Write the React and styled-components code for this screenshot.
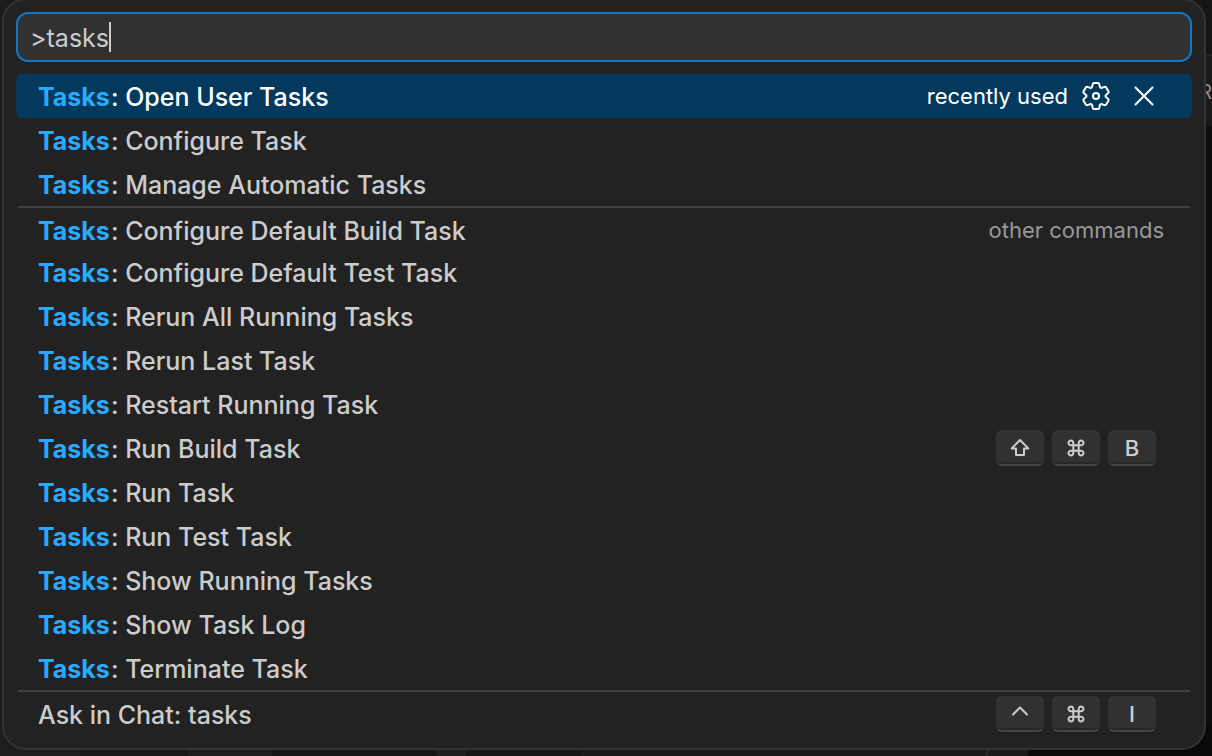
import React, { useState } from "react";
import styled, { createGlobalStyle } from "styled-components";

const GlobalStyle = createGlobalStyle`
  *, *::before, *::after { box-sizing: border-box; }
  html { background: #1b1b1b; overflow: hidden; }
  body {
    margin: 0;
    font-family: Inter, "Liberation Sans", sans-serif;
    font-feature-settings: "calt" 0;
    color: #cccccc;
    -webkit-font-smoothing: antialiased;
  }
`;

const Workbench = styled.div`
  position: relative;
  min-height: 100vh;
  overflow: hidden;
  padding: 0 6px 0 2px;
  background: #1b1b1b;
`;

const SideStrip = styled.div`
  position: absolute;
  top: 0;
  right: 0;
  bottom: 0;
  width: 24px;
  background: #0e0e0e;
`;

const SideTab = styled.div`
  position: absolute;
  right: 0;
  top: 0;
  width: 24px;
  height: 126px;
  background: linear-gradient(#151515 54px, #222222 54px, #222222 56px, #191919 56px);
`;

const SideLabel = styled.span`
  position: absolute;
  right: 0;
  top: 78px;
  font-size: 20px;
  line-height: 28px;
  color: #8c8c8c;
`;

const StatusStrip = styled.div`
  position: absolute;
  left: 0;
  right: 0;
  bottom: 0;
  height: 32px;
  display: flex;
  background: #1c1c1c;
`;

const StatusPart = styled.div`
  flex: ${(p) => p.$size} 0 0;
  background: ${(p) => p.$tone};
`;

const Panel = styled.main`
  position: relative;
  margin-top: -2px;
  padding: 12px 12px 14px;
  border: 2px solid #333333;
  border-radius: 24px;
  background: #222222;
`;

const SearchBox = styled.label`
  display: flex;
  align-items: center;
  height: 50px;
  margin-bottom: 12px;
  padding: 0 12px;
  overflow: hidden;
  border: 2px solid #1177c7;
  border-radius: 12px;
  background: #313131;
  cursor: text;
`;

const SearchInput = styled.input`
  field-sizing: content;
  min-width: 2px;
  max-width: 100%;
  height: 32px;
  margin-top: 2px;
  padding: 0;
  border: 0;
  outline: none;
  background: none;
  color: #cccccc;
  caret-color: transparent;
  font: inherit;
  font-size: 25px;
`;

const Caret = styled.span`
  width: 2px;
  height: 30px;
  background: #cccccc;
`;

const Results = styled.ul`
  margin: 0;
  padding: 0;
  list-style: none;
`;

const Row = styled.li`
  position: relative;
  display: flex;
  align-items: center;
  height: 44px;
  padding: ${(p) => (p.$divided ? "6px 28px 0 22px" : "2px 28px 0 22px")};
  border-radius: 6px;
  background: ${(p) => (p.$active ? "#04395e" : "transparent")};
  color: ${(p) => (p.$active ? "#ffffff" : "#cccccc")};

  &::before {
    content: "";
    display: ${(p) => (p.$divided ? "block" : "none")};
    position: absolute;
    top: 0;
    left: 2px;
    right: 2px;
    height: 2px;
    background: #3f3f3f;
  }
`;

const Label = styled.span`
  flex: 1;
  font-size: 25px;
  font-weight: 450;
  line-height: 32px;
  white-space: pre;
`;

const Match = styled.b`
  margin-right: 1px;
  font-weight: 750;
  color: #2aaaff;
`;

const Trailing = styled.div`
  display: flex;
  align-items: center;
  margin-bottom: 2px;
`;

const Hint = styled.span`
  font-size: 22px;
  line-height: 28px;
  color: ${(p) => (p.$active ? "#ffffff" : "#989898")};
`;

const Actions = styled.div`
  display: flex;
  gap: 16px;
  margin: 0 4px 0 12px;
`;

const IconButton = styled.button`
  display: flex;
  width: 32px;
  height: 32px;
  padding: 0;
  border: 0;
  background: none;
  color: inherit;
`;

const Keys = styled.div`
  display: flex;
  gap: 8px;
  margin-right: 8px;
`;

const Key = styled.kbd`
  display: flex;
  align-items: center;
  justify-content: center;
  width: 48px;
  height: 36px;
  border: 2px solid #333333;
  border-bottom-color: #444444;
  border-radius: 6px;
  background: #313131;
  box-shadow: inset 0 -2px 0 #272727;
  font-family: inherit;
  font-size: 22px;
  font-weight: 450;
  line-height: 28px;
  color: #cccccc;
`;

const Glyph = styled.svg`
  display: block;
  fill: none;
  stroke: currentColor;
  stroke-width: 2;
  stroke-linecap: round;
  stroke-linejoin: round;
`;

const ShiftIcon = () => (
  <Glyph width="20" height="20" viewBox="0 0 20 20" aria-label="Shift">
    <path d="M10 2 L18.300 10.400 H14 V17 H6 V10.400 H1.700 Z" />
  </Glyph>
);

const CommandIcon = () => (
  <Glyph width="18" height="18" viewBox="0 0 18 18" aria-label="Command">
    <path d="M6.300 6.300 H11.700 V11.700 H6.300 Z M6.300 6.300 H4 A2.400 2.400 0 1 1 6.300 4 Z M11.700 6.300 V4 A2.400 2.400 0 1 1 14 6.300 Z M11.700 11.700 H14 A2.400 2.400 0 1 1 11.700 14 Z M6.300 11.700 V14 A2.400 2.400 0 1 1 4 11.700 Z" />
  </Glyph>
);

const ControlIcon = () => (
  <Glyph width="18" height="22" viewBox="0 0 18 22" aria-label="Control">
    <path d="M2 11.500 L9 4.500 L16 11.500" />
  </Glyph>
);

const GearIcon = () => (
  <Glyph width="32" height="32" viewBox="0 0 32 32">
    <circle cx="16" cy="16" r="3" />
    <path d="M14 3 H18 Q19 3 19.300 4.200 L19.800 6.600 Q20.200 8.300 21.900 7.800 L24.600 6.900 Q25.600 6.600 26.200 7.500 L28.400 11.300 Q28.900 12.300 28.200 13 L26.200 14.700 Q24.800 16 26.200 17.300 L28.200 19 Q28.900 19.700 28.400 20.700 L26.200 24.500 Q25.600 25.400 24.600 25.100 L21.900 24.200 Q20.200 23.700 19.800 25.400 L19.300 27.800 Q19 29 18 29 H14 Q13 29 12.700 27.800 L12.200 25.400 Q11.800 23.700 10.100 24.200 L7.400 25.100 Q6.400 25.400 5.800 24.500 L3.600 20.700 Q3.100 19.700 3.800 19 L5.800 17.300 Q7.200 16 5.800 14.700 L3.800 13 Q3.100 12.300 3.600 11.300 L5.800 7.500 Q6.400 6.600 7.400 6.900 L10.100 7.800 Q11.800 8.300 12.200 6.600 L12.700 4.200 Q13 3 14 3 Z" />
  </Glyph>
);

const CloseIcon = () => (
  <Glyph width="32" height="32" viewBox="0 0 32 32">
    <path d="M7.500 7.500 L24.500 24.500 M24.500 7.500 L7.500 24.500" />
  </Glyph>
);

const commands = [
  { name: "Open User Tasks", active: true, hint: "recently used" },
  { name: "Configure Task" },
  { name: "Manage Automatic Tasks" },
  { name: "Configure Default Build Task", divided: true, hint: "other commands" },
  { name: "Configure Default Test Task" },
  { name: "Rerun All Running Tasks" },
  { name: "Rerun Last Task" },
  { name: "Restart Running Task" },
  { name: "Run Build Task", keys: [<ShiftIcon />, <CommandIcon />, "B"] },
  { name: "Run Task" },
  { name: "Run Test Task" },
  { name: "Show Running Tasks" },
  { name: "Show Task Log" },
  { name: "Terminate Task" },
];

const Shortcut = ({ keys }) => (
  <Keys>
    {keys.map((k, i) => (
      <Key key={i}>{k}</Key>
    ))}
  </Keys>
);

export default function App() {
  const [query, setQuery] = useState(">tasks");
  return (
    <Workbench>
      <GlobalStyle />
      <SideStrip />
      <SideTab>
        <SideLabel>R</SideLabel>
      </SideTab>
      <StatusStrip>
        <StatusPart $size={80} $tone="#1e1e1e" />
        <StatusPart $size={108} $tone="#171717" />
        <StatusPart $size={84} $tone="#1e1e1e" />
        <StatusPart $size={165} $tone="#151515" />
        <StatusPart $size={29} $tone="#1f1f1f" />
        <StatusPart $size={115} $tone="#151515" />
        <StatusPart $size={405} $tone="#1b1b1b" />
        <StatusPart $size={2} $tone="#292929" />
        <StatusPart $size={40} $tone="#1b1b1b" />
        <StatusPart $size={184} $tone="#090909" />
      </StatusStrip>
      <Panel>
        <SearchBox>
          <SearchInput
            autoFocus
            aria-label="Search commands"
            spellCheck={false}
            value={query}
            onChange={(e) => setQuery(e.target.value)}
          />
          <Caret />
        </SearchBox>
        <Results>
          {commands.map((c) => (
            <Row key={c.name} $active={c.active} $divided={c.divided}>
              <Label>
                <Match>Tasks</Match>: {c.name}
              </Label>
              <Trailing>
                {c.hint && <Hint $active={c.active}>{c.hint}</Hint>}
                {c.active && (
                  <Actions>
                    <IconButton aria-label="Configure keybinding">
                      <GearIcon />
                    </IconButton>
                    <IconButton aria-label="Remove from recently used">
                      <CloseIcon />
                    </IconButton>
                  </Actions>
                )}
                {c.keys && <Shortcut keys={c.keys} />}
              </Trailing>
            </Row>
          ))}
          <Row $divided>
            <Label>Ask in Chat: tasks</Label>
            <Trailing>
              <Shortcut keys={[<ControlIcon />, <CommandIcon />, "I"]} />
            </Trailing>
          </Row>
        </Results>
      </Panel>
    </Workbench>
  );
}
